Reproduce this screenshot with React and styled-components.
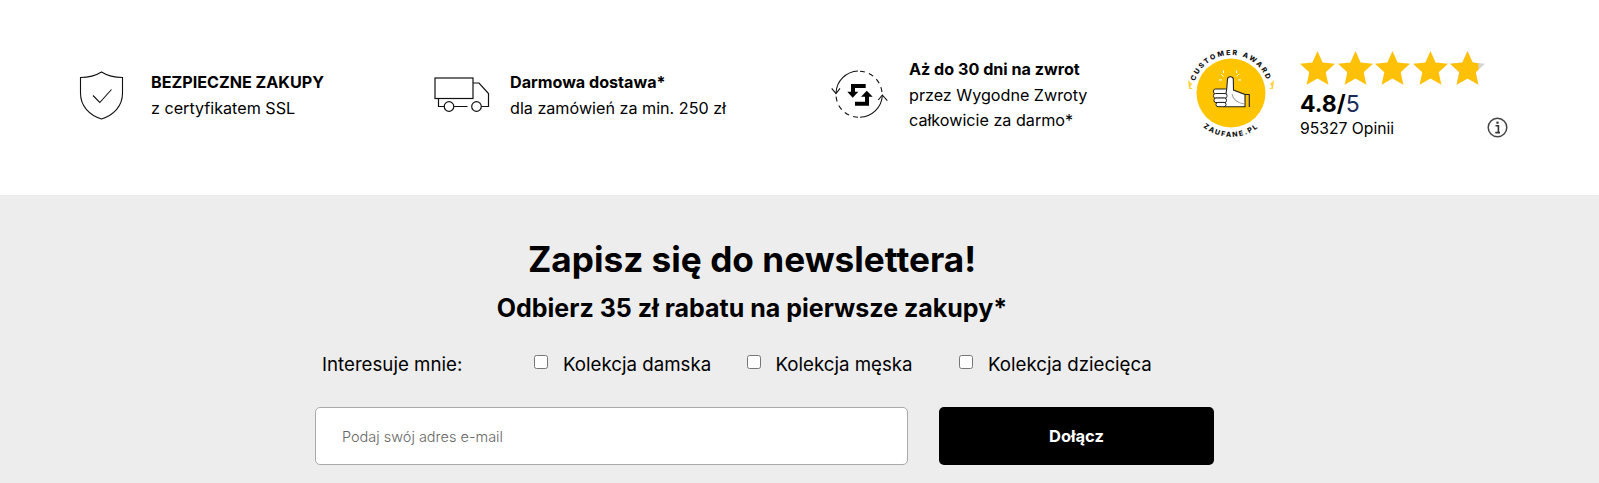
import React from 'react'
import styled, { createGlobalStyle } from 'styled-components'

const GlobalStyle = createGlobalStyle`
  * {
    box-sizing: border-box;
  }
  body {
    margin: 0;
    background: #fff;
    color: #000;
    font-family: Inter, "Liberation Sans", sans-serif;
  }
`

function ShieldIcon() {
  return (
    <RaisedSvg $lift={5} width="45" height="49" viewBox="0 0 45 49" fill="none" stroke="#111" strokeWidth="1.1">
      <path d="M22.5 1 C17 4.5 9 6.5 1.5 6.5 L1.5 22 C1.5 35 10 44 22.5 48 C35 44 43.5 35 43.5 22 L43.5 6.5 C36 6.5 28 4.5 22.5 1 Z" />
      <path d="M14 24.5 L20.8 31.5 L32.5 18.5" />
    </RaisedSvg>
  )
}

function TruckIcon() {
  return (
    <RaisedSvg $lift={6} width="56" height="36" viewBox="0 0 56 36" fill="none" stroke="#111" strokeWidth="1.2">
      <rect x="1" y="1" width="38" height="20.5" />
      <path d="M39 6 H45 L54.5 16.5 V29.5 H47.5 M33.5 29.5 H20 M10.5 29.5 H4.5 V21.5" />
      <circle cx="15" cy="29.5" r="4.8" />
      <circle cx="42.5" cy="29.5" r="4.8" />
    </RaisedSvg>
  )
}

function ReturnsIcon() {
  return (
    <RaisedSvg $lift={7} width="60" height="56" viewBox="0 0 60 56" fill="none" stroke="#111" strokeWidth="1.1">
      <path d="M31 5.3 A23 23 0 0 1 53 28 M29 51.3 A23 23 0 0 1 7 29" strokeDasharray="5 4.2" />
      <path d="M7 27 A23 23 0 0 1 29 5" />
      <path d="M2.7 22.3 L7 27.5 L11 22.3" />
      <path d="M53.3 30 A23 23 0 0 1 31 51.3" />
      <path d="M49.3 34 L53.3 29 L58.3 34.7" />
      <path
        d="M22 18 H36.7 V22 H26 V25.7 H29.3 L23.7 31.7 L18.3 25.7 H22 Z M40 39.7 H26 V35.7 H36 V30.7 H32 L37.8 24.7 L43.7 30.7 H40 Z"
        fill="#000"
        stroke="none"
      />
    </RaisedSvg>
  )
}

function AwardBadge() {
  return (
    <svg width="90" height="96" viewBox="0 0 90 96">
      <defs>
        <path id="awardTop" d="M7 48 A38 38 0 0 1 83 48" />
        <path id="awardBottom" d="M1 48 A44 44 0 0 0 89 48" />
      </defs>
      <circle cx="45" cy="48" r="34.5" fill="#ffc400" />
      <text fontFamily="Inter, sans-serif" fontSize="7" fontWeight="800" letterSpacing="1.9" fill="#111">
        <textPath href="#awardTop" startOffset="50%" textAnchor="middle">CUSTOMER AWARD</textPath>
      </text>
      <text fontFamily="Inter, sans-serif" fontSize="7" fontWeight="800" letterSpacing="1.6" fill="#111">
        <textPath href="#awardBottom" startOffset="50%" textAnchor="middle">ZAUFANE.PL</textPath>
      </text>
      <path d="M2 35 L6 39 L4 42 L7 44 L3 44 Z" fill="#ffd23f" />
      <path d="M88 35 L84 39 L86 42 L83 44 L87 44 Z" fill="#ffd23f" />
      <rect x="27.5" y="44" width="14" height="5" rx="2" fill="#fff" stroke="#222" strokeWidth="1" />
      <path
        d="M40.7 44 L41.5 34 C41.8 31 47 31 47.3 34 L47.5 45 L59 49.5 V61.7 H38 Z"
        fill="#fff"
        stroke="#222"
        strokeWidth="1.1"
      />
      <rect x="27.5" y="48.5" width="13.5" height="4.7" rx="2" fill="#fff" stroke="#222" strokeWidth="1" />
      <rect x="28" y="53" width="12.5" height="4.6" rx="2" fill="#fff" stroke="#222" strokeWidth="1" />
      <rect x="30" y="57.4" width="10" height="4.3" rx="2" fill="#fff" stroke="#222" strokeWidth="1" />
      <path d="M46 49 C47 54 51 58 58.5 59" fill="none" stroke="#999" strokeWidth="1.1" />
      <path d="M59 49.5 H63.3 V62" fill="none" stroke="#222" strokeWidth="1.1" />
      <path d="M35 29 L37.5 31.5 M33 35 H36 M37.5 25.5 V28 M53 29 L50.5 31.5 M55 35 H52 M50.5 25.5 V28" stroke="#fff" strokeWidth="1" />
    </svg>
  )
}

const starPath = 'M17.5 0 L22.6 11.6 L35 12.8 L25.7 21.2 L28.4 33.8 L17.5 27.4 L6.6 33.8 L9.3 21.2 L0 12.8 L12.4 11.6 Z'

function Star({ partial }) {
  return (
    <StarSvg viewBox="0 0 35 34">
      {partial ? (
        <>
          <path d={starPath} fill="#d4d4d4" />
          <path d={starPath} fill="#ffc107" clipPath="url(#starClip)" />
          <clipPath id="starClip">
            <rect x="0" y="0" width="28.5" height="34" />
          </clipPath>
        </>
      ) : (
        <path d={starPath} fill="#ffc107" />
      )}
    </StarSvg>
  )
}

function InfoIcon() {
  return (
    <RaisedSvg $lift={4} width="21" height="21" viewBox="0 0 21 21" fill="none">
      <circle cx="10.5" cy="10.5" r="9.3" stroke="#444" strokeWidth="1.5" />
      <rect x="9.4" y="4.6" width="2.2" height="2.2" fill="#333" />
      <path d="M8.5 8.8 H11.4 V15.2 M8.3 15.6 H13" stroke="#333" strokeWidth="1.6" />
    </RaisedSvg>
  )
}

function App() {
  return (
    <Page>
      <GlobalStyle />
      <BenefitsBar>
        <Benefit $width={355}>
          <IconSlot $width={72}><ShieldIcon /></IconSlot>
          <BenefitText>
            <strong>BEZPIECZNE ZAKUPY</strong>
            <span>z certyfikatem SSL</span>
          </BenefitText>
        </Benefit>
        <Benefit $width={395}>
          <IconSlot $width={76}><TruckIcon /></IconSlot>
          <BenefitText>
            <strong>Darmowa dostawa*</strong>
            <span>dla zamówień za min. 250 zł</span>
          </BenefitText>
        </Benefit>
        <Benefit $width={357}>
          <IconSlot $width={80}><ReturnsIcon /></IconSlot>
          <BenefitText>
            <strong>Aż do 30 dni na zwrot</strong>
            <span>przez Wygodne Zwroty</span>
            <span>całkowicie za darmo*</span>
          </BenefitText>
        </Benefit>
        <BadgeSlot><AwardBadge /></BadgeSlot>
        <Rating>
          <Stars>
            <Star />
            <Star />
            <Star />
            <Star />
            <Star partial />
          </Stars>
          <Score>4.8/<span>5</span></Score>
          <OpinionRow>
            <span>95327 Opinii</span>
            <InfoIcon />
          </OpinionRow>
        </Rating>
      </BenefitsBar>
      <Newsletter>
        <Heading>Zapisz się do newslettera!</Heading>
        <SubHeading>Odbierz 35 zł rabatu na pierwsze zakupy*</SubHeading>
        <FormArea>
          <Interests>
            <InterestsLabel>Interesuje mnie:</InterestsLabel>
            <Choice><input type="checkbox" />Kolekcja damska</Choice>
            <Choice><input type="checkbox" />Kolekcja męska</Choice>
            <Choice><input type="checkbox" />Kolekcja dziecięca</Choice>
          </Interests>
          <SignupRow>
            <EmailInput type="text" placeholder="Podaj swój adres e-mail" />
            <JoinButton>Dołącz</JoinButton>
          </SignupRow>
        </FormArea>
      </Newsletter>
    </Page>
  )
}

const Page = styled.div`
  width: 1599px;
  height: 483px;
  overflow: hidden;
`

const BenefitsBar = styled.section`
  display: flex;
  align-items: center;
  height: 195px;
  padding-left: 79px;
`

const Benefit = styled.div`
  display: flex;
  align-items: center;
  width: ${(p) => p.$width}px;
`

const IconSlot = styled.div`
  display: flex;
  flex: none;
  width: ${(p) => p.$width}px;
`

const RaisedSvg = styled.svg`
  margin-top: -${(p) => p.$lift}px;
`

const BenefitText = styled.div`
  display: flex;
  flex-direction: column;
  margin-top: -4px;
  font-size: 16.15px;
  line-height: 25.5px;
  white-space: nowrap;

  strong {
    font-weight: 700;
  }
`

const BadgeSlot = styled.div`
  display: flex;
  flex: none;
  width: 114px;
  margin-top: -9px;
`

const Rating = styled.div`
  display: flex;
  flex-direction: column;
  width: 208px;
  margin-top: -5px;
`

const Stars = styled.div`
  display: flex;
  gap: 2.5px;
`

const StarSvg = styled.svg`
  width: 35px;
  height: 34px;
`

const Score = styled.div`
  font-size: 23px;
  font-weight: 700;
  line-height: 30px;
  margin-top: 4px;

  span {
    font-weight: 400;
    color: #1b2a5c;
  }
`

const OpinionRow = styled.div`
  display: flex;
  justify-content: space-between;
  align-items: center;
  font-size: 15.7px;
  line-height: 20px;
`

const Newsletter = styled.section`
  height: 288px;
  background: #ededed;
`

const Heading = styled.h2`
  width: 1504px;
  margin: 0;
  padding-top: 44px;
  text-align: center;
  font-size: 35.2px;
  line-height: 40px;
  font-weight: 700;
`

const SubHeading = styled.h3`
  width: 1504px;
  margin: 14px 0 0;
  text-align: center;
  font-size: 25px;
  line-height: 30px;
  font-weight: 700;
`

const FormArea = styled.div`
  display: flex;
  flex-direction: column;
  width: 899px;
  margin: 26px 0 0 315px;
`

const Interests = styled.div`
  display: flex;
  align-items: center;
  height: 30px;
  padding-left: 7px;
  font-size: 18.7px;
`

const InterestsLabel = styled.span`
  width: 212px;
`

const Choice = styled.label`
  display: flex;
  align-items: center;
  width: 212.5px;

  input {
    width: 14px;
    height: 14px;
    margin: 0 15px 0 0;
    transform: translateY(-2px);
  }
`

const SignupRow = styled.div`
  display: flex;
  justify-content: space-between;
  margin-top: 28px;
`

const EmailInput = styled.input`
  width: 593px;
  height: 58px;
  padding: 0 26px;
  background: #fff;
  border: 1px solid #aaa;
  border-radius: 5px;
  font-family: Inter, sans-serif;
  font-size: 14.5px;
  font-weight: 300;

  &::placeholder {
    color: #666;
    opacity: 1;
  }
`

const JoinButton = styled.button`
  width: 275px;
  height: 58px;
  background: #000;
  border: none;
  border-radius: 5px;
  color: #fff;
  font-family: Inter, sans-serif;
  font-size: 16.5px;
  font-weight: 700;
`

export default App
